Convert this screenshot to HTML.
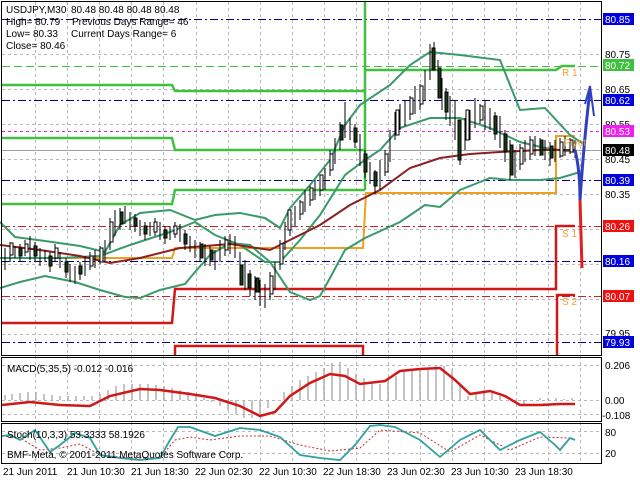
<!DOCTYPE html>
<html><head><meta charset="utf-8"><style>
html,body{margin:0;padding:0;background:#fff;}
svg{display:block;font-family:"Liberation Sans",sans-serif;}
</style></head><body>
<svg width="640" height="480" viewBox="0 0 640 480" xmlns="http://www.w3.org/2000/svg">
<rect width="640" height="480" fill="#fff"/>
<g stroke="#b8b8b8" stroke-width="1" stroke-dasharray="3,3">
<line x1="35.5" y1="2" x2="35.5" y2="462"/><line x1="67.5" y1="2" x2="67.5" y2="462"/><line x1="99.5" y1="2" x2="99.5" y2="462"/><line x1="131.5" y1="2" x2="131.5" y2="462"/><line x1="163.5" y1="2" x2="163.5" y2="462"/><line x1="196.5" y1="2" x2="196.5" y2="462"/><line x1="228.5" y1="2" x2="228.5" y2="462"/><line x1="260.5" y1="2" x2="260.5" y2="462"/><line x1="292.5" y1="2" x2="292.5" y2="462"/><line x1="324.5" y1="2" x2="324.5" y2="462"/><line x1="356.5" y1="2" x2="356.5" y2="462"/><line x1="388.5" y1="2" x2="388.5" y2="462"/><line x1="420.5" y1="2" x2="420.5" y2="462"/><line x1="452.5" y1="2" x2="452.5" y2="462"/><line x1="484.5" y1="2" x2="484.5" y2="462"/><line x1="516.5" y1="2" x2="516.5" y2="462"/><line x1="548.5" y1="2" x2="548.5" y2="462"/><line x1="580.5" y1="2" x2="580.5" y2="462"/>
<line x1="2" y1="54.5" x2="601" y2="54.5"/><line x1="2" y1="89.5" x2="601" y2="89.5"/><line x1="2" y1="124.5" x2="601" y2="124.5"/><line x1="2" y1="159.5" x2="601" y2="159.5"/><line x1="2" y1="194.5" x2="601" y2="194.5"/><line x1="2" y1="229.5" x2="601" y2="229.5"/><line x1="2" y1="264.5" x2="601" y2="264.5"/><line x1="2" y1="299.5" x2="601" y2="299.5"/><line x1="2" y1="334.5" x2="601" y2="334.5"/>
<line x1="2" y1="365.5" x2="601" y2="365.5"/><line x1="2" y1="400.5" x2="601" y2="400.5"/><line x1="2" y1="414.5" x2="601" y2="414.5"/>
<line x1="2" y1="431.5" x2="601" y2="431.5"/><line x1="2" y1="453.5" x2="601" y2="453.5"/>
</g>
<g stroke="#000080" stroke-width="1" stroke-dasharray="8,3,2,3">
<line x1="2" y1="19.5" x2="601" y2="19.5"/><line x1="2" y1="100.5" x2="601" y2="100.5"/><line x1="2" y1="180.5" x2="601" y2="180.5"/><line x1="2" y1="261.5" x2="601" y2="261.5"/><line x1="2" y1="342.5" x2="601" y2="342.5"/>
</g>
<line x1="2" y1="131.5" x2="601" y2="131.5" stroke="#e020e0" stroke-dasharray="3,3"/>
<line x1="2" y1="66.5" x2="601" y2="66.5" stroke="#40c040" stroke-dasharray="8,4"/>
<g stroke="#d02020" stroke-dasharray="8,3,2,3"><line x1="2" y1="226.5" x2="601" y2="226.5"/><line x1="2" y1="296.5" x2="601" y2="296.5"/></g>
<line x1="2" y1="150.5" x2="601" y2="150.5" stroke="#a0a0a0"/>
<g fill="none" stroke-width="2.5">
<path d="M2,85 H172 L175,91 H365" stroke="#40c040"/>
<path d="M2,138 H172 L175,150 H365" stroke="#40c040"/>
<path d="M2,204 H172 L175,190 H365" stroke="#40c040"/>
<path d="M365,2 V190 M365,70 H556 L562,66 H575" stroke="#40c040"/>
<path d="M2,258 H172 L175,248 H363 L366,193 H556 V136 H575" stroke="#f0a020" stroke-width="2"/>
<path d="M2,323 H172 L175,289 H556 V226 H575" stroke="#d01818"/>
<path d="M175,355 V346 H363 V355 M557,355 V295 H575" stroke="#d01818"/>
</g>
<g fill="none" stroke="#3a9a6a" stroke-width="2">
<polyline points="0,222 15,237 45,241 80,246 105,252 120,225 140,213 170,210 195,220 215,215 240,213 265,218 280,228 290,208 310,185 330,160 345,125 360,105 390,85 410,65 430,52 460,55 500,60 520,110 545,108 570,135 585,145"/>
<polyline points="0,258 60,258 100,256 130,245 170,232 195,222 215,235 240,245 265,262 280,262 300,240 320,215 345,175 365,160 380,150 400,128 430,118 460,118 490,128 520,142 545,148 575,152"/>
<polyline points="0,288 20,282 45,276 75,282 100,290 125,297 140,298 160,290 185,284 195,272 210,255 230,243 250,245 270,262 290,292 310,300 320,296 330,278 345,250 365,238 400,222 425,205 440,207 460,190 490,178 510,180 540,180 560,178 580,172"/>
</g>
<polyline fill="none" stroke="#8b2020" stroke-width="2" points="0,245 40,250 80,256 110,263 140,258 180,248 230,244 270,250 290,240 320,225 350,205 380,190 410,168 440,158 470,154 500,152 540,150 575,150"/>
<g stroke="#000" stroke-width="1" fill="none">
<path d="M5,248V270M10,242V262M15,246V258M20,244V262M25,240V256M30,236V260M35,242V262M40,248V266M45,250V262M50,252V272M55,244V262M60,252V268M66,258V278M70,264V282M75,266V284M80,262V280M85,256V276M90,252V270M95,250V268M100,246V264M105,240V262M110,218V250M115,210V236M120,208V230M125,206V224M130,212V230M135,214V232M140,220V236M145,222V240M150,222V236M155,218V236M160,222V240M165,226V244M170,226V240M175,222V238M180,224V242M185,230V250M190,236V252M195,240V258M200,242V262M205,244V266M210,246V266M215,250V270M220,240V262M225,236V256M230,234V254M235,236V258M240,252V280M245,260V290M250,270V296M255,276V300M260,280V306M265,284V308M270,272V300M275,262V290M280,240V270M285,222V250M290,210V236M295,206V226M300,200V220M305,190V212M310,186V206M315,180V200M320,176V196M325,168V190M330,150V176M335,138V164M340,122V150M345,102V138M350,118V140M355,124V148M360,134V166M365,150V178M370,162V184M375,170V194M380,160V190M385,150V176M390,130V162M395,112V140M400,104V130M405,100V126M410,96V120M415,86V114M420,84V110M425,70V100M430,44V80M434,42V68M438,60V94M442,78V110M446,88V120M450,96V126M455,100V140M460,120V165M465,118V150M470,110V140M475,98V128M480,104V124M485,100V130M490,108V130M495,112V140M500,116V148M505,130V162M510,140V180M515,150V178M520,144V170M525,140V162M530,136V160M535,136V156M540,138V156M545,140V160M550,142V166M555,140V162M560,138V158M565,136V156M570,138V154M575,140V158"/>
</g>
<g stroke="#000" fill="#1a3a1a">
<rect x="19" y="248" width="3" height="8"/><rect x="34" y="246" width="3" height="10"/><rect x="49" y="256" width="3" height="10"/><rect x="65" y="262" width="3" height="10"/><rect x="79" y="266" width="3" height="8"/><rect x="120" y="212" width="3" height="12"/><rect x="134" y="218" width="3" height="8"/><rect x="144" y="226" width="3" height="8"/><rect x="164" y="230" width="3" height="8"/><rect x="184" y="234" width="3" height="10"/><rect x="200" y="244" width="3" height="14"/><rect x="210" y="250" width="3" height="10"/><rect x="240" y="265" width="3" height="20"/><rect x="248" y="274" width="3" height="14"/><rect x="256" y="278" width="3" height="14"/><rect x="340" y="125" width="3" height="15"/><rect x="354" y="128" width="3" height="14"/><rect x="364" y="154" width="3" height="18"/><rect x="374" y="172" width="3" height="14"/><rect x="432" y="48" width="3" height="22"/><rect x="438" y="68" width="3" height="30"/><rect x="445" y="92" width="3" height="20"/><rect x="458" y="120" width="3" height="40"/><rect x="494" y="116" width="3" height="18"/><rect x="504" y="134" width="3" height="18"/><rect x="510" y="145" width="3" height="30"/><rect x="540" y="140" width="3" height="15"/><rect x="550" y="146" width="3" height="12"/>
</g>
<g stroke="#000" fill="#fff">
<rect x="10" y="243" width="3" height="12"/><rect x="25" y="244" width="3" height="8"/><rect x="55" y="248" width="3" height="10"/><rect x="90" y="256" width="3" height="10"/><rect x="100" y="248" width="3" height="14"/><rect x="110" y="222" width="3" height="20"/><rect x="154" y="222" width="3" height="10"/><rect x="174" y="226" width="3" height="8"/><rect x="225" y="240" width="3" height="10"/><rect x="270" y="276" width="3" height="18"/><rect x="280" y="244" width="3" height="20"/><rect x="288" y="210" width="3" height="20"/><rect x="300" y="202" width="3" height="12"/><rect x="310" y="188" width="3" height="12"/><rect x="320" y="175" width="3" height="15"/><rect x="330" y="154" width="3" height="16"/><rect x="385" y="154" width="3" height="18"/><rect x="396" y="110" width="3" height="25"/><rect x="410" y="98" width="3" height="16"/><rect x="420" y="86" width="3" height="18"/><rect x="466" y="110" width="3" height="30"/><rect x="480" y="106" width="3" height="14"/><rect x="520" y="148" width="3" height="16"/><rect x="530" y="140" width="3" height="14"/><rect x="560" y="142" width="3" height="14"/><rect x="570" y="140" width="3" height="12"/>
</g>
<path d="M575,150 Q580,170 580,200 Q584,140 590,90" fill="none" stroke="#3040c0" stroke-width="3"/>
<path d="M585,104 L590,86 L594,116" fill="none" stroke="#3040c0" stroke-width="2"/>
<path d="M580,200 L582,268" stroke="#e02020" stroke-width="3"/>
<g font-size="10" fill="#f0a030"><text x="562" y="76">R 1</text><text x="564" y="146">Pivot</text><text x="562" y="237">S 1</text><text x="562" y="305">S 2</text></g>
<g stroke="#b0b0b0" stroke-width="1.5">
<path d="M5,400V395M12,400V394M20,400V393M28,400V392M36,400V392M44,400V394M52,400V395M60,400V396M68,400V396M76,400V396M84,400V396M92,400V396M100,400V394M108,400V390M116,400V386M124,400V384M132,400V384M140,400V384M148,400V384M156,400V385M164,400V386M172,400V388M180,400V390M188,400V392M196,400V395M204,400V398M212,400V402M220,400V406M228,400V410M236,400V414M244,400V418M252,400V418M260,400V414M268,400V408M276,400V400M284,400V392M292,400V386M300,400V380M308,400V376M316,400V372M324,400V368M332,400V363M340,400V362M348,400V368M356,400V374M364,400V378M372,400V382M380,400V384M388,400V380M396,400V376M404,400V372M412,400V370M420,400V370M428,400V368M436,400V366M444,400V366M452,400V370M460,400V384M468,400V396M476,400V394M484,400V390M492,400V392M500,400V396M508,400V400M516,400V402M524,400V404M532,400V400M540,400V398M548,400V398M556,400V398M564,400V399M572,400V398"/>
</g>
<polyline fill="none" stroke="#d01818" stroke-width="2.5" points="2,405 30,402 60,405 90,406 110,396 140,389 160,390 190,394 215,398 240,406 260,416 275,412 290,396 310,383 330,374 345,376 360,384 385,381 400,371 420,369 440,368 455,380 470,394 490,391 505,396 520,405 540,405 560,404 575,404"/>
<polyline fill="none" stroke="#c03030" stroke-width="1" stroke-dasharray="2,2" points="2,436 20,438 40,450 60,448 80,444 100,455 130,458 160,458 175,440 190,437 210,440 240,436 270,436 300,445 330,451 360,448 380,430 420,433 450,452 480,435 510,450 540,437 570,438"/>
<polyline fill="none" stroke="#30a0a0" stroke-width="1.8" points="2,436 10,435 20,440 35,430 50,452 60,445 75,433 90,438 100,455 120,458 140,460 160,458 170,440 178,427 190,427 215,436 240,428 260,430 280,437 300,455 320,458 340,460 355,445 370,426 380,425 395,427 420,440 440,457 460,440 480,430 500,450 520,440 540,432 555,445 560,450 570,438 575,440"/>
<g fill="none" stroke="#000" stroke-width="1">
<rect x="1.5" y="1.5" width="600" height="354"/>
<rect x="1.5" y="357.5" width="600" height="64"/>
<rect x="1.5" y="423.5" width="600" height="40"/>
</g>
<g font-size="10" fill="#000">
<text x="605" y="58">80.75</text><text x="605" y="93">80.65</text><text x="605" y="128">80.55</text><text x="605" y="163">80.45</text><text x="605" y="198">80.35</text><text x="605" y="232">80.25</text><text x="605" y="267">80.15</text><text x="605" y="302">80.05</text><text x="605" y="337">79.95</text>
<text x="605" y="369">0.206</text><text x="605" y="404">0.00</text><text x="602" y="419">-0.108</text>
<text x="605" y="436">80</text><text x="605" y="457">20</text>
</g>
<g font-size="10" fill="#fff">
<rect x="603" y="13" width="31" height="12" fill="#0000e0"/><text x="605" y="23">80.85</text>
<rect x="603" y="59" width="31" height="12" fill="#40c040"/><text x="605" y="69">80.72</text>
<rect x="603" y="94" width="31" height="12" fill="#0000e0"/><text x="605" y="104">80.62</text>
<rect x="603" y="125" width="31" height="12" fill="#f020f0"/><text x="605" y="135">80.53</text>
<rect x="603" y="144" width="31" height="12" fill="#000"/><text x="605" y="154">80.48</text>
<rect x="603" y="174" width="31" height="12" fill="#0000e0"/><text x="605" y="184">80.39</text>
<rect x="603" y="220" width="31" height="12" fill="#f01010"/><text x="605" y="230">80.26</text>
<rect x="603" y="255" width="31" height="12" fill="#0000e0"/><text x="605" y="265">80.16</text>
<rect x="603" y="290" width="31" height="12" fill="#f01010"/><text x="605" y="300">80.07</text>
<rect x="603" y="336" width="31" height="12" fill="#0000e0"/><text x="605" y="346">79.93</text>
</g>
<g font-size="10" fill="#000">
<text x="6" y="13">USDJPY,M30</text><text x="71" y="13">80.48 80.48 80.48 80.48</text>
<text x="6" y="25">High= 80.79</text><text x="72" y="25">Previous Days Range= 46</text>
<text x="6" y="37">Low= 80.33</text><text x="71" y="37">Current Days Range= 6</text>
<text x="6" y="49">Close= 80.46</text>
<text x="7" y="372">MACD(5,35,5) -0.012 -0.016</text>
<text x="7" y="438">Stoch(10,3,3) 53.3333 58.1926</text>
<text x="7" y="458">BMF-Meta, © 2001-2011 MetaQuotes Software Corp.</text>
<text x="3" y="475">21 Jun 2011</text><text x="67" y="475">21 Jun 10:30</text><text x="131" y="475">21 Jun 18:30</text><text x="195" y="475">22 Jun 02:30</text><text x="259" y="475">22 Jun 10:30</text><text x="323" y="475">22 Jun 18:30</text><text x="387" y="475">23 Jun 02:30</text><text x="451" y="475">23 Jun 10:30</text><text x="515" y="475">23 Jun 18:30</text>
</g>
</svg>
</body></html>
